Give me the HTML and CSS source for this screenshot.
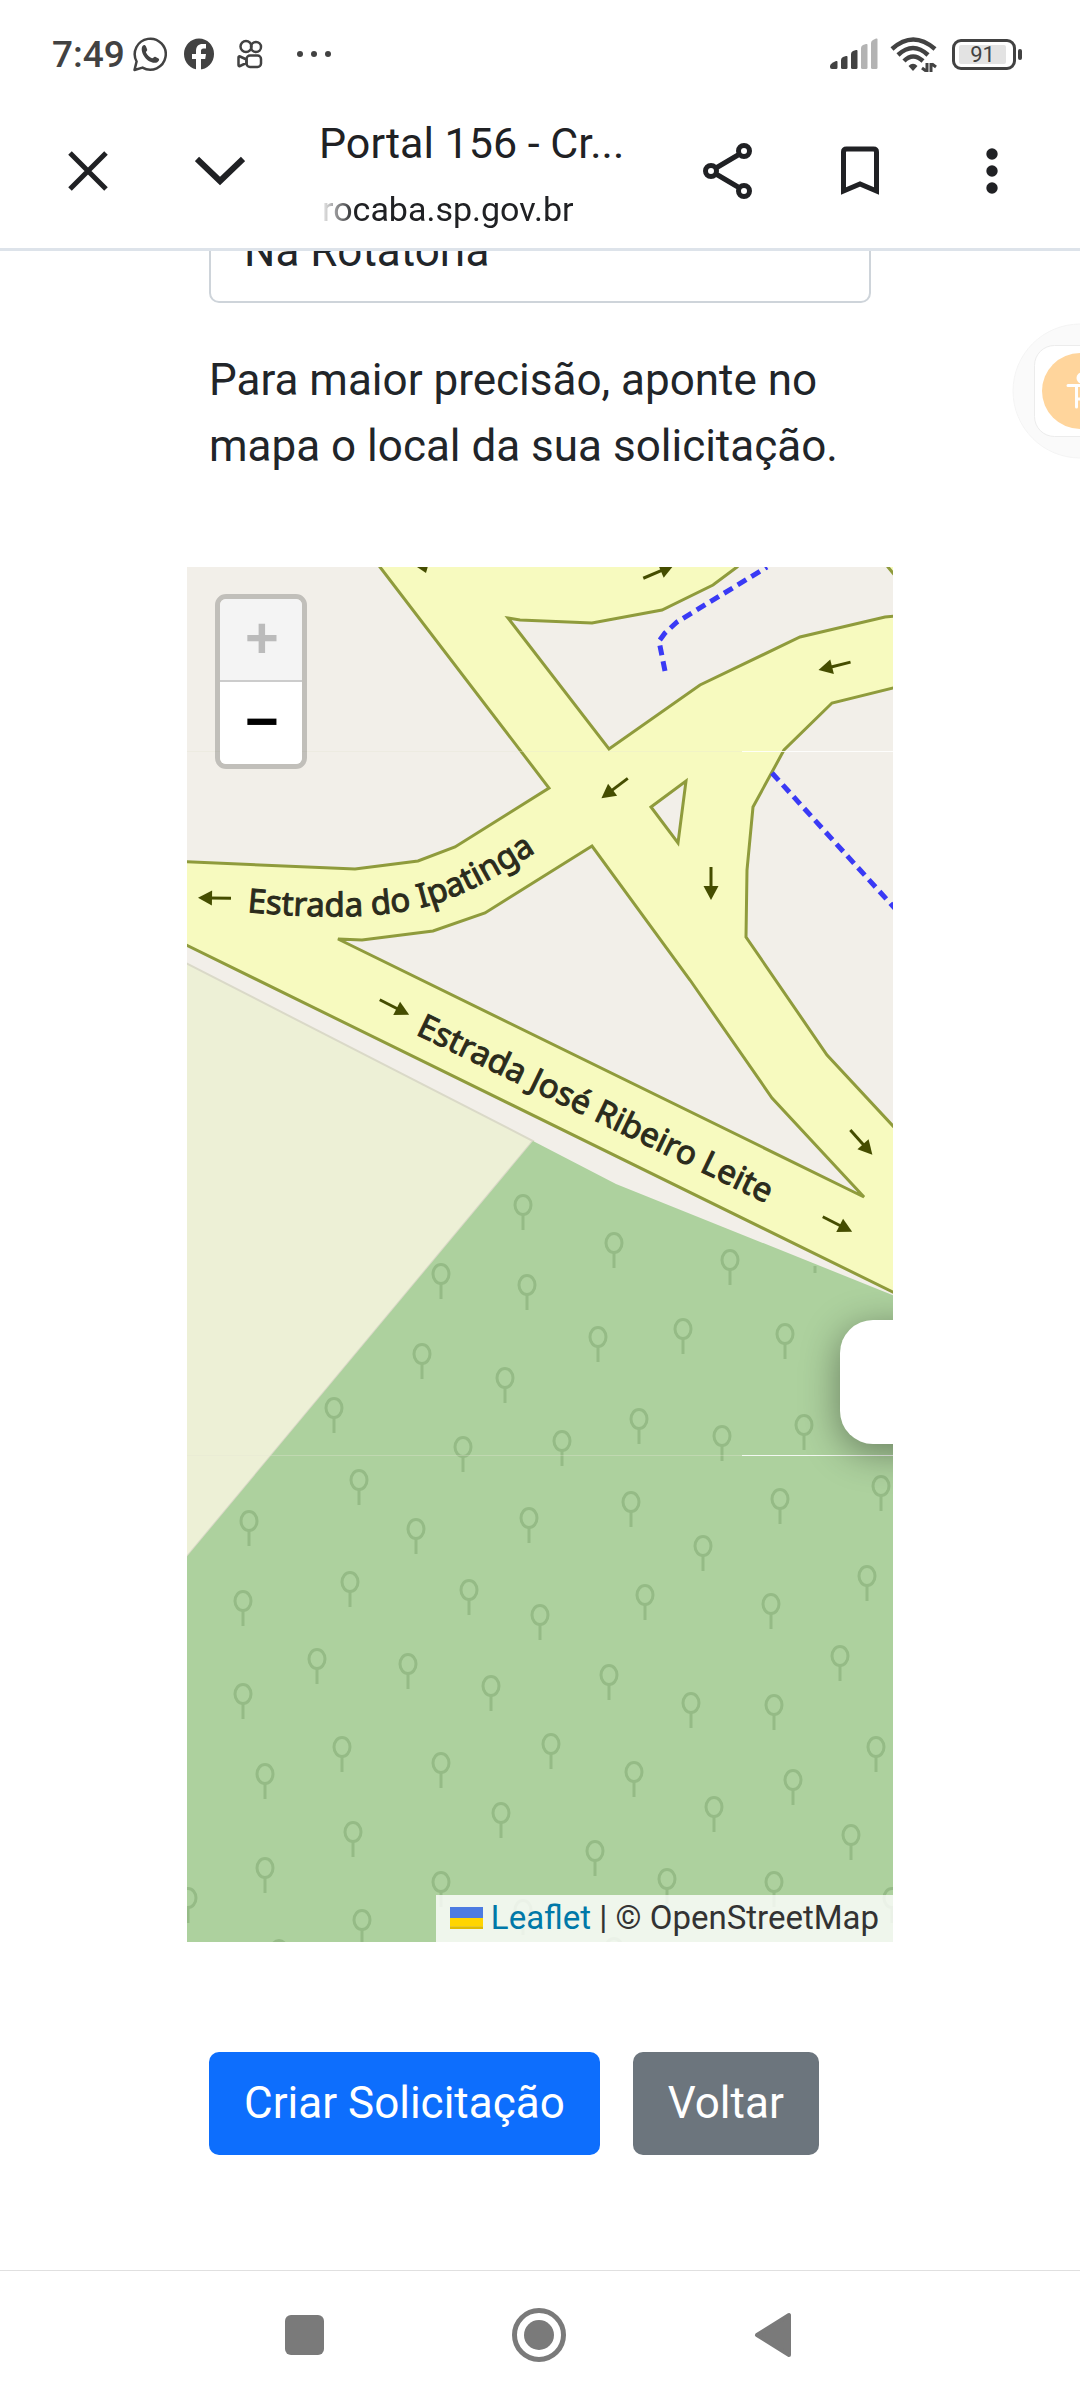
FILE: index.html
```html
<!DOCTYPE html>
<html lang="pt-BR">
<head>
  <meta charset="UTF-8" />
  <meta name="viewport" content="width=device-width, initial-scale=1.0"/>
  <title>Portal 156 - Criar Solicitação</title>
  <link rel="stylesheet" href="styles.css">
</head>
<body>

<div class="status-bar">
  <div class="status-left">
    <span class="clock">7:49</span>
    <svg width="34" height="36" viewBox="0 0 34 36" fill="none" stroke="#424242" stroke-width="2.5">
      <path d="M1.5 34 L3.6 25.5 A15.5 15.5 0 1 1 9.500 31.600 Z" stroke-linejoin="round"/>
      <path d="M9 11c1-2.500 3-2.800 4-.5l1.200 3c.4 1.500-1.700 2-1.200 3 1.500 2.800 3.300 4.600 6 5.800 1.300.4 2-1.900 3.200-1.500l3.300 1.700c1.500 1 .1 3-1.500 3.900C16 29 7 18 9 11z" fill="#424242" stroke="none"/>
    </svg>
    <svg class="icon-facebook" width="30" height="32" viewBox="0 0 30 32">
      <ellipse cx="15" cy="16" rx="15" ry="15.500" fill="#424242"/>
      <path d="M12 32V21H8v-5h4v-3c0-4.500 2.500-7 6.500-7H22v4.500h-2.500c-1.800 0-2.500 1-2.500 2.500v3h5l-.8 5H17v11z" fill="#fff"/>
    </svg>
    <svg class="icon-kwai" width="26" height="30" viewBox="0 0 26 30" fill="none" stroke="#424242" stroke-width="2.500">
      <circle cx="9" cy="7.500" r="5.500"/>
      <circle cx="19" cy="8" r="5"/>
      <rect x="9.500" y="16.500" width="14.500" height="11.500" rx="3.500"/>
      <path d="M9.500 20.500L3 17.500c-1-.4-1.500 0-1.500 1v7.500c0 1 .5 1.400 1.500 1l6.500-3z"/>
    </svg>
    <svg class="icon-dots" width="34" height="8" viewBox="0 0 34 8" fill="#424242">
      <circle cx="3" cy="4" r="3"/><circle cx="17" cy="4" r="3"/><circle cx="31" cy="4" r="3"/>
    </svg>
  </div>
  <div class="status-right">
    <svg width="48" height="32" viewBox="0 0 48 32" fill="#424242">
      <path d="M0 28q0-2 3-3.500l3-1.500q1.500-.5 1.500 1v5.500q0 1.500-1.500 1.500H2q-2 0-2-2z"/>
      <path d="M11 22q0-2 2-3l3-1q1.500-.5 1.500 1v10.500q0 1.500-1.500 1.500h-3.500q-1.500 0-1.500-1.500z"/>
      <path d="M21 16q0-2 2-3l3-1q1.500-.5 1.500 1v16.500q0 1.500-1.500 1.500h-3.500q-1.500 0-1.500-1.500z"/>
      <path d="M31 10q0-2 2-3l3-1q1.500-.5 1.500 1v22.500q0 1.500-1.500 1.500h-3.500q-1.500 0-1.500-1.500z" fill="#b3b3b3"/>
      <path d="M41 5q0-2 2-3l3-1.500q1.500-.5 1.500 1v28q0 1.500-1.500 1.500h-3.500q-1.500 0-1.500-1.500z" fill="#b3b3b3"/>
    </svg>
    <svg width="48" height="36" viewBox="0 0 48 36" fill="none" stroke="#424242" stroke-width="4.500">
      <path d="M2 13Q23 -6 45 13"/>
      <path d="M8 19Q23 5 38 19"/>
      <path d="M14 25Q23 16 33 25"/>
      <path d="M18.500 30q4.500-4.500 9 0l-4.500 5z" fill="#424242" stroke="none"/>
      <path d="M37 27v9M32 32l4 3M41 36v-9M46 31l-4-3" stroke-width="3"/>
    </svg>
    <div class="battery"><span>91</span></div>
  </div>
</div>

<header class="toolbar">
  <button class="tool-btn" aria-label="Fechar">
    <svg width="40" height="40" viewBox="0 0 40 40" stroke="#202124" stroke-width="5"><path d="M2 2L38 38M38 2L2 38"/></svg>
  </button>
  <button class="tool-btn" aria-label="Minimizar">
    <svg width="50" height="30" viewBox="0 0 50 30" fill="none" stroke="#202124" stroke-width="6"><path d="M2 3L25 25L48 3"/></svg>
  </button>
  <div class="page-info">
    <div class="page-title">Portal 156 - Cr...</div>
    <div class="page-url"><span>rocaba.sp.gov.br</span></div>
  </div>
  <button class="tool-btn" aria-label="Compartilhar">
    <svg width="52" height="58" viewBox="0 0 52 58" fill="none" stroke="#202124" stroke-width="5">
      <path d="M14 26L36 13M14 32L36 45"/>
      <circle cx="9" cy="29" r="5.500"/><circle cx="42" cy="9" r="5.500"/><circle cx="42" cy="49" r="5.500"/>
    </svg>
  </button>
  <button class="tool-btn" aria-label="Favoritar">
    <svg width="40" height="50" viewBox="0 0 40 50" fill="none" stroke="#202124" stroke-width="5">
      <path d="M3.500 45V6q0-3 3-3h27q3 0 3 3v39L20 38z"/>
    </svg>
  </button>
  <button class="tool-btn" aria-label="Mais opções">
    <svg width="12" height="46" viewBox="0 0 12 46" fill="#202124"><circle cx="6" cy="6" r="5.700"/><circle cx="6" cy="23" r="5.700"/><circle cx="6" cy="40" r="5.700"/></svg>
  </button>
</header>

<main class="content">
  <div class="form-field">
    <input type="text" id="referencia" aria-label="Ponto de referência" value="Na Rotatória" />
    <p>Para maior precisão, aponte no mapa o local da sua solicitação.</p>
  </div>

  <div class="map">
    <svg class="map-tiles" viewBox="187 567 706 1375" preserveAspectRatio="xMinYMin slice">
      <defs>
        <g id="tree"><ellipse rx="8" ry="9.500"/><path d="M0 10V25"/></g>
        <g id="arrow"><path d="M-16 0H6" stroke="#454d00" stroke-width="3"/><path d="M3 -7.500L17 0L3 7.500z" fill="#454d00"/></g>
        <path id="ipatinga" d="M247 912C300 917 355 919 400 912C455 903 490 881 560 837"/>
        <path id="ribeiro" d="M415 1034L840 1239"/>
      </defs>

      <!-- roads are the yellow base, the blocks lie on top of it -->
      <rect x="180" y="560" width="720" height="1400" fill="#f7fabf"/>
      <g fill="#f2efe9" stroke="#8f9b3c" stroke-width="3">
        <path d="M170 550H367L380 567L549 788L455 847L418 861L355 869L170 861z"/>
        <path d="M508 618L520 620L592 623L662 610L713 585L737 567L760 545H872L888 567L905 588V615L885 617L800 637L700 685L609 749z"/>
        <path d="M905 685L832 703L784 750L753 807L747 870L746 937L827 1055L905 1139z"/>
        <path d="M651 807L686 781L678 843z"/>
        <path d="M592 846L485 913L433 931L362 940L338 939L864 1197L772 1098L690 980z"/>
        <path d="M170 937L905 1298V1960H170z"/>
      </g>
      <path d="M180 960L533 1141L180 1565z" fill="#edf0d6" stroke="#dad9c8" stroke-width="2"/>
      <path d="M533 1141L616 1184L900 1298V1960H180V1565z" fill="#add19e"/>

      <g fill="none" stroke="#95bb86" stroke-width="3">
        <use href="#tree" x="523" y="1205"/><use href="#tree" x="614" y="1243"/><use href="#tree" x="730" y="1260"/>
        <use href="#tree" x="441" y="1274"/><use href="#tree" x="527" y="1285"/><path d="M815 1266V1273"/>
        <use href="#tree" x="683" y="1329"/><use href="#tree" x="598" y="1337"/><use href="#tree" x="785" y="1334"/>
        <use href="#tree" x="422" y="1354"/><use href="#tree" x="505" y="1378"/><use href="#tree" x="334" y="1408"/>
        <use href="#tree" x="639" y="1419"/><use href="#tree" x="562" y="1441"/><use href="#tree" x="722" y="1436"/>
        <use href="#tree" x="804" y="1425"/><use href="#tree" x="463" y="1447"/><use href="#tree" x="359" y="1480"/>
        <use href="#tree" x="881" y="1486"/><use href="#tree" x="780" y="1499"/><use href="#tree" x="631" y="1502"/>
        <use href="#tree" x="529" y="1518"/><use href="#tree" x="249" y="1521"/><use href="#tree" x="416" y="1529"/>
        <use href="#tree" x="703" y="1546"/><use href="#tree" x="867" y="1576"/><use href="#tree" x="350" y="1582"/>
        <use href="#tree" x="469" y="1590"/><use href="#tree" x="645" y="1595"/><use href="#tree" x="771" y="1604"/>
        <use href="#tree" x="243" y="1601"/><use href="#tree" x="540" y="1615"/><use href="#tree" x="840" y="1656"/>
        <use href="#tree" x="317" y="1659"/><use href="#tree" x="408" y="1664"/><use href="#tree" x="609" y="1675"/>
        <use href="#tree" x="491" y="1686"/><use href="#tree" x="243" y="1694"/><use href="#tree" x="691" y="1703"/>
        <use href="#tree" x="774" y="1705"/><use href="#tree" x="342" y="1747"/><use href="#tree" x="551" y="1744"/>
        <use href="#tree" x="876" y="1747"/><use href="#tree" x="441" y="1763"/><use href="#tree" x="634" y="1772"/>
        <use href="#tree" x="265" y="1774"/><use href="#tree" x="793" y="1780"/><use href="#tree" x="501" y="1813"/>
        <use href="#tree" x="714" y="1807"/><use href="#tree" x="353" y="1832"/><use href="#tree" x="851" y="1835"/>
        <use href="#tree" x="595" y="1851"/><use href="#tree" x="265" y="1868"/><use href="#tree" x="441" y="1882"/>
        <use href="#tree" x="667" y="1879"/><use href="#tree" x="774" y="1882"/><use href="#tree" x="188" y="1898"/>
        <use href="#tree" x="892" y="1898"/><use href="#tree" x="362" y="1920"/><use href="#tree" x="523" y="1910"/>
        <use href="#tree" x="279" y="1950"/><use href="#tree" x="614" y="1948"/>
      </g>

      <!-- footpaths -->
      <g fill="none" stroke="#3a3af5" stroke-width="5" stroke-dasharray="10 6">
        <path d="M665 671L659 641L665 633L677 622L767 567"/>
        <path d="M772 773L900 914"/>
      </g>

      <!-- one-way arrows -->
      <use href="#arrow" transform="translate(215 898) rotate(181)"/>
      <use href="#arrow" transform="translate(394 1007) rotate(27)"/>
      <use href="#arrow" transform="translate(837 1224) rotate(27)"/>
      <use href="#arrow" transform="translate(861 1142) rotate(48)"/>
      <use href="#arrow" transform="translate(835 666) rotate(166)"/>
      <use href="#arrow" transform="translate(615 788) rotate(143)"/>
      <use href="#arrow" transform="translate(711 883) rotate(90)"/>
      <use href="#arrow" transform="translate(658 572) rotate(-23)"/>
      <path d="M414 565L428 566L426 573z" fill="#454d00"/>

      <text class="road-name"><textPath href="#ipatinga">Estrada do Ipatinga</textPath></text>
      <text class="road-name"><textPath href="#ribeiro">Estrada José Ribeiro Leite</textPath></text>

      <!-- tile seams -->
      <path d="M187 751.500H742M187 1455.500H742" stroke="#e4e6d4" stroke-opacity=".35"/>
      <path d="M742 751.500H893M742 1455.500H893" stroke="#fff" stroke-opacity=".85"/>
    </svg>

    <div class="map-popup"></div>

    <div class="zoom-control">
      <button class="zoom-in" aria-label="Zoom in" disabled>+</button>
      <button aria-label="Zoom out">−</button>
    </div>

    <div class="attribution">
      <a href="#"><svg width="33" height="22" viewBox="0 0 12 8"><path fill="#4C7BE1" d="M0 0h12v4H0z"/><path fill="#FFD500" d="M0 4h12v3H0z"/><path fill="#E0BC00" d="M0 7h12v1H0z"/></svg> Leaflet</a> | © OpenStreetMap
    </div>
  </div>

  <div class="actions">
    <button class="btn btn-primary">Criar Solicitação</button>
    <button class="btn btn-secondary">Voltar</button>
  </div>
</main>

<button class="accessibility" aria-label="Acessibilidade">
  <svg width="80" height="150" viewBox="0 0 80 150">
    <circle cx="80" cy="75" r="67" fill="#fafafa" stroke="#f4f4f4"/>
    <rect x="34.500" y="29.500" width="92" height="91" rx="20" fill="#fff" stroke="#ececec"/>
    <circle cx="80" cy="75" r="38" fill="#ffd59c"/>
    <circle cx="82" cy="62" r="5.500" fill="#fff"/>
    <path d="M68 69.500H80M76.500 70V91M77 83H80" stroke="#fff" stroke-width="3" stroke-linecap="round"/>
  </svg>
</button>

<nav class="system-nav">
  <button aria-label="Recentes">
    <svg width="40" height="40"><rect width="39" height="40" rx="6" fill="#7a7a7a"/></svg>
  </button>
  <button aria-label="Início">
    <svg width="54" height="54"><circle cx="27" cy="27" r="24.500" fill="none" stroke="#7a7a7a" stroke-width="5"/><circle cx="27" cy="27" r="15" fill="#7a7a7a"/></svg>
  </button>
  <button aria-label="Voltar">
    <svg width="38" height="46"><path d="M3 23L35 3V43z" fill="#7a7a7a" stroke="#7a7a7a" stroke-width="4" stroke-linejoin="round"/></svg>
  </button>
</nav>

</body>
</html>
```
FILE: styles.css
```css
* {
  box-sizing: border-box;
}
body {
  font-family: Roboto, "Liberation Sans", sans-serif;
  background: #fff;
  color: #212529;
  margin: 0;
  min-height: 100vh;
  display: flex;
  flex-direction: column;
}
button {
  font-family: inherit;
  border: none;
  background: none;
  padding: 0;
  cursor: pointer;
}
svg {
  display: block;
}

/* status bar */
.status-bar {
  height: 108px;
  padding: 0 64px 0 52px;
  display: flex;
  justify-content: space-between;
  color: #424242;
}
.status-left, .status-right {
  height: 108px;
  display: flex;
  align-items: center;
}
.status-right {
  gap: 12px;
}
.clock {
  font-size: 37px;
  font-weight: 500;
  margin-right: 8px;
}
.icon-facebook {
  margin-left: 17px;
}
.icon-kwai {
  margin-left: 23px;
}
.icon-dots {
  margin-left: 34px;
}
.battery {
  position: relative;
  width: 64px;
  height: 31px;
  margin-left: 2px;
  padding: 3px 7px 3px 4px;
  border: 3px solid #424242;
  border-radius: 9px;
}
.battery span {
  display: block;
  background: #e3e3e3;
  border-radius: 2px;
  font-size: 22px;
  line-height: 19px;
  text-align: center;
}
.battery::after {
  content: "";
  position: absolute;
  right: -9px;
  top: 7px;
  width: 4px;
  height: 11px;
  border-radius: 2px;
  background: #424242;
}

/* browser toolbar */
.toolbar {
  height: 143px;
  padding: 0 22px;
  border-bottom: 3px solid #dde3ea;
  display: flex;
  color: #202124;
}
.tool-btn {
  width: 132px;
  height: 126px;
  display: flex;
  align-items: center;
  justify-content: center;
}
.page-info {
  flex: 1;
  padding-left: 33px;
  overflow: hidden;
  white-space: nowrap;
}
.page-title {
  font-size: 43px;
  line-height: 66px;
  margin-top: 2px;
}
.page-url {
  font-size: 34px;
  line-height: 66px;
  padding-left: 3px;
  -webkit-mask-image: linear-gradient(to right, transparent 0, #000 36px);
  mask-image: linear-gradient(to right, transparent 0, #000 36px);
}

/* page */
.content {
  flex: 1;
  padding: 0 187px;
  overflow: hidden;
}
.form-field {
  margin-top: -52px;
  padding: 0 22px;
}
.form-field input {
  display: block;
  width: 100%;
  height: 104px;
  padding: 16px 33px;
  border: 2px solid #ced4da;
  border-radius: 10px;
  background: #fff;
  color: #212529;
  font: 44px/66px Roboto, sans-serif;
}
.form-field p {
  margin: 44px 0 88px;
  font-size: 44px;
  line-height: 66px;
}

.map {
  position: relative;
  height: 1375px;
  overflow: hidden;
  background: #f2efe9;
}
.map-tiles {
  width: 100%;
  height: 100%;
}
.road-name {
  font-family: "Noto Sans", sans-serif;
  font-size: 33px;
  fill: #2b2b1c;
  stroke: #2b2b1c;
  stroke-width: 1px;
}
.map-popup {
  position: absolute;
  top: 753px;
  right: -67px;
  width: 120px;
  height: 124px;
  background: #fff;
  border-radius: 33px;
  box-shadow: 0 8px 38px rgba(0, 0, 0, 0.4);
}
.zoom-control {
  position: absolute;
  top: 27px;
  left: 28px;
  border: 5px solid rgba(0, 0, 0, 0.2);
  border-radius: 11px;
}
.zoom-control button {
  display: block;
  width: 82px;
  height: 82px;
  padding: 6px 0 0 2px;
  background: #fff;
  color: #000;
  border-radius: 0 0 6px 6px;
  font: bold 58px/76px "Liberation Mono", monospace;
}
.zoom-control .zoom-in {
  height: 83px;
  background: #f4f4f4;
  color: #bbb;
  border-bottom: 2px solid #ccc;
  border-radius: 6px 6px 0 0;
}
.attribution {
  position: absolute;
  right: 0;
  bottom: 0;
  padding: 0 14px 2px;
  background: rgba(255, 255, 255, 0.8);
  color: #333;
  font-size: 33px;
  line-height: 45px;
  white-space: nowrap;
}
.attribution a {
  color: #0078a8;
  text-decoration: none;
}
.attribution svg {
  display: inline;
}

.actions {
  display: flex;
  gap: 33px;
  margin: 110px 0;
  padding: 0 22px;
}
.btn {
  padding: 0 35px;
  border-radius: 10px;
  color: #fff;
  font-size: 44px;
  line-height: 103px;
}
.btn-primary {
  background: #0d6efd;
}
.btn-secondary {
  background: #6c757d;
}

.accessibility {
  position: fixed;
  top: 316px;
  right: 0;
}

/* android navigation */
.system-nav {
  height: 130px;
  padding: 0 2px 2px 0;
  border-top: 1px solid #e0e0e0;
  display: flex;
  justify-content: center;
  gap: 134px;
}
.system-nav button {
  width: 100px;
  display: flex;
  align-items: center;
  justify-content: center;
}
```
